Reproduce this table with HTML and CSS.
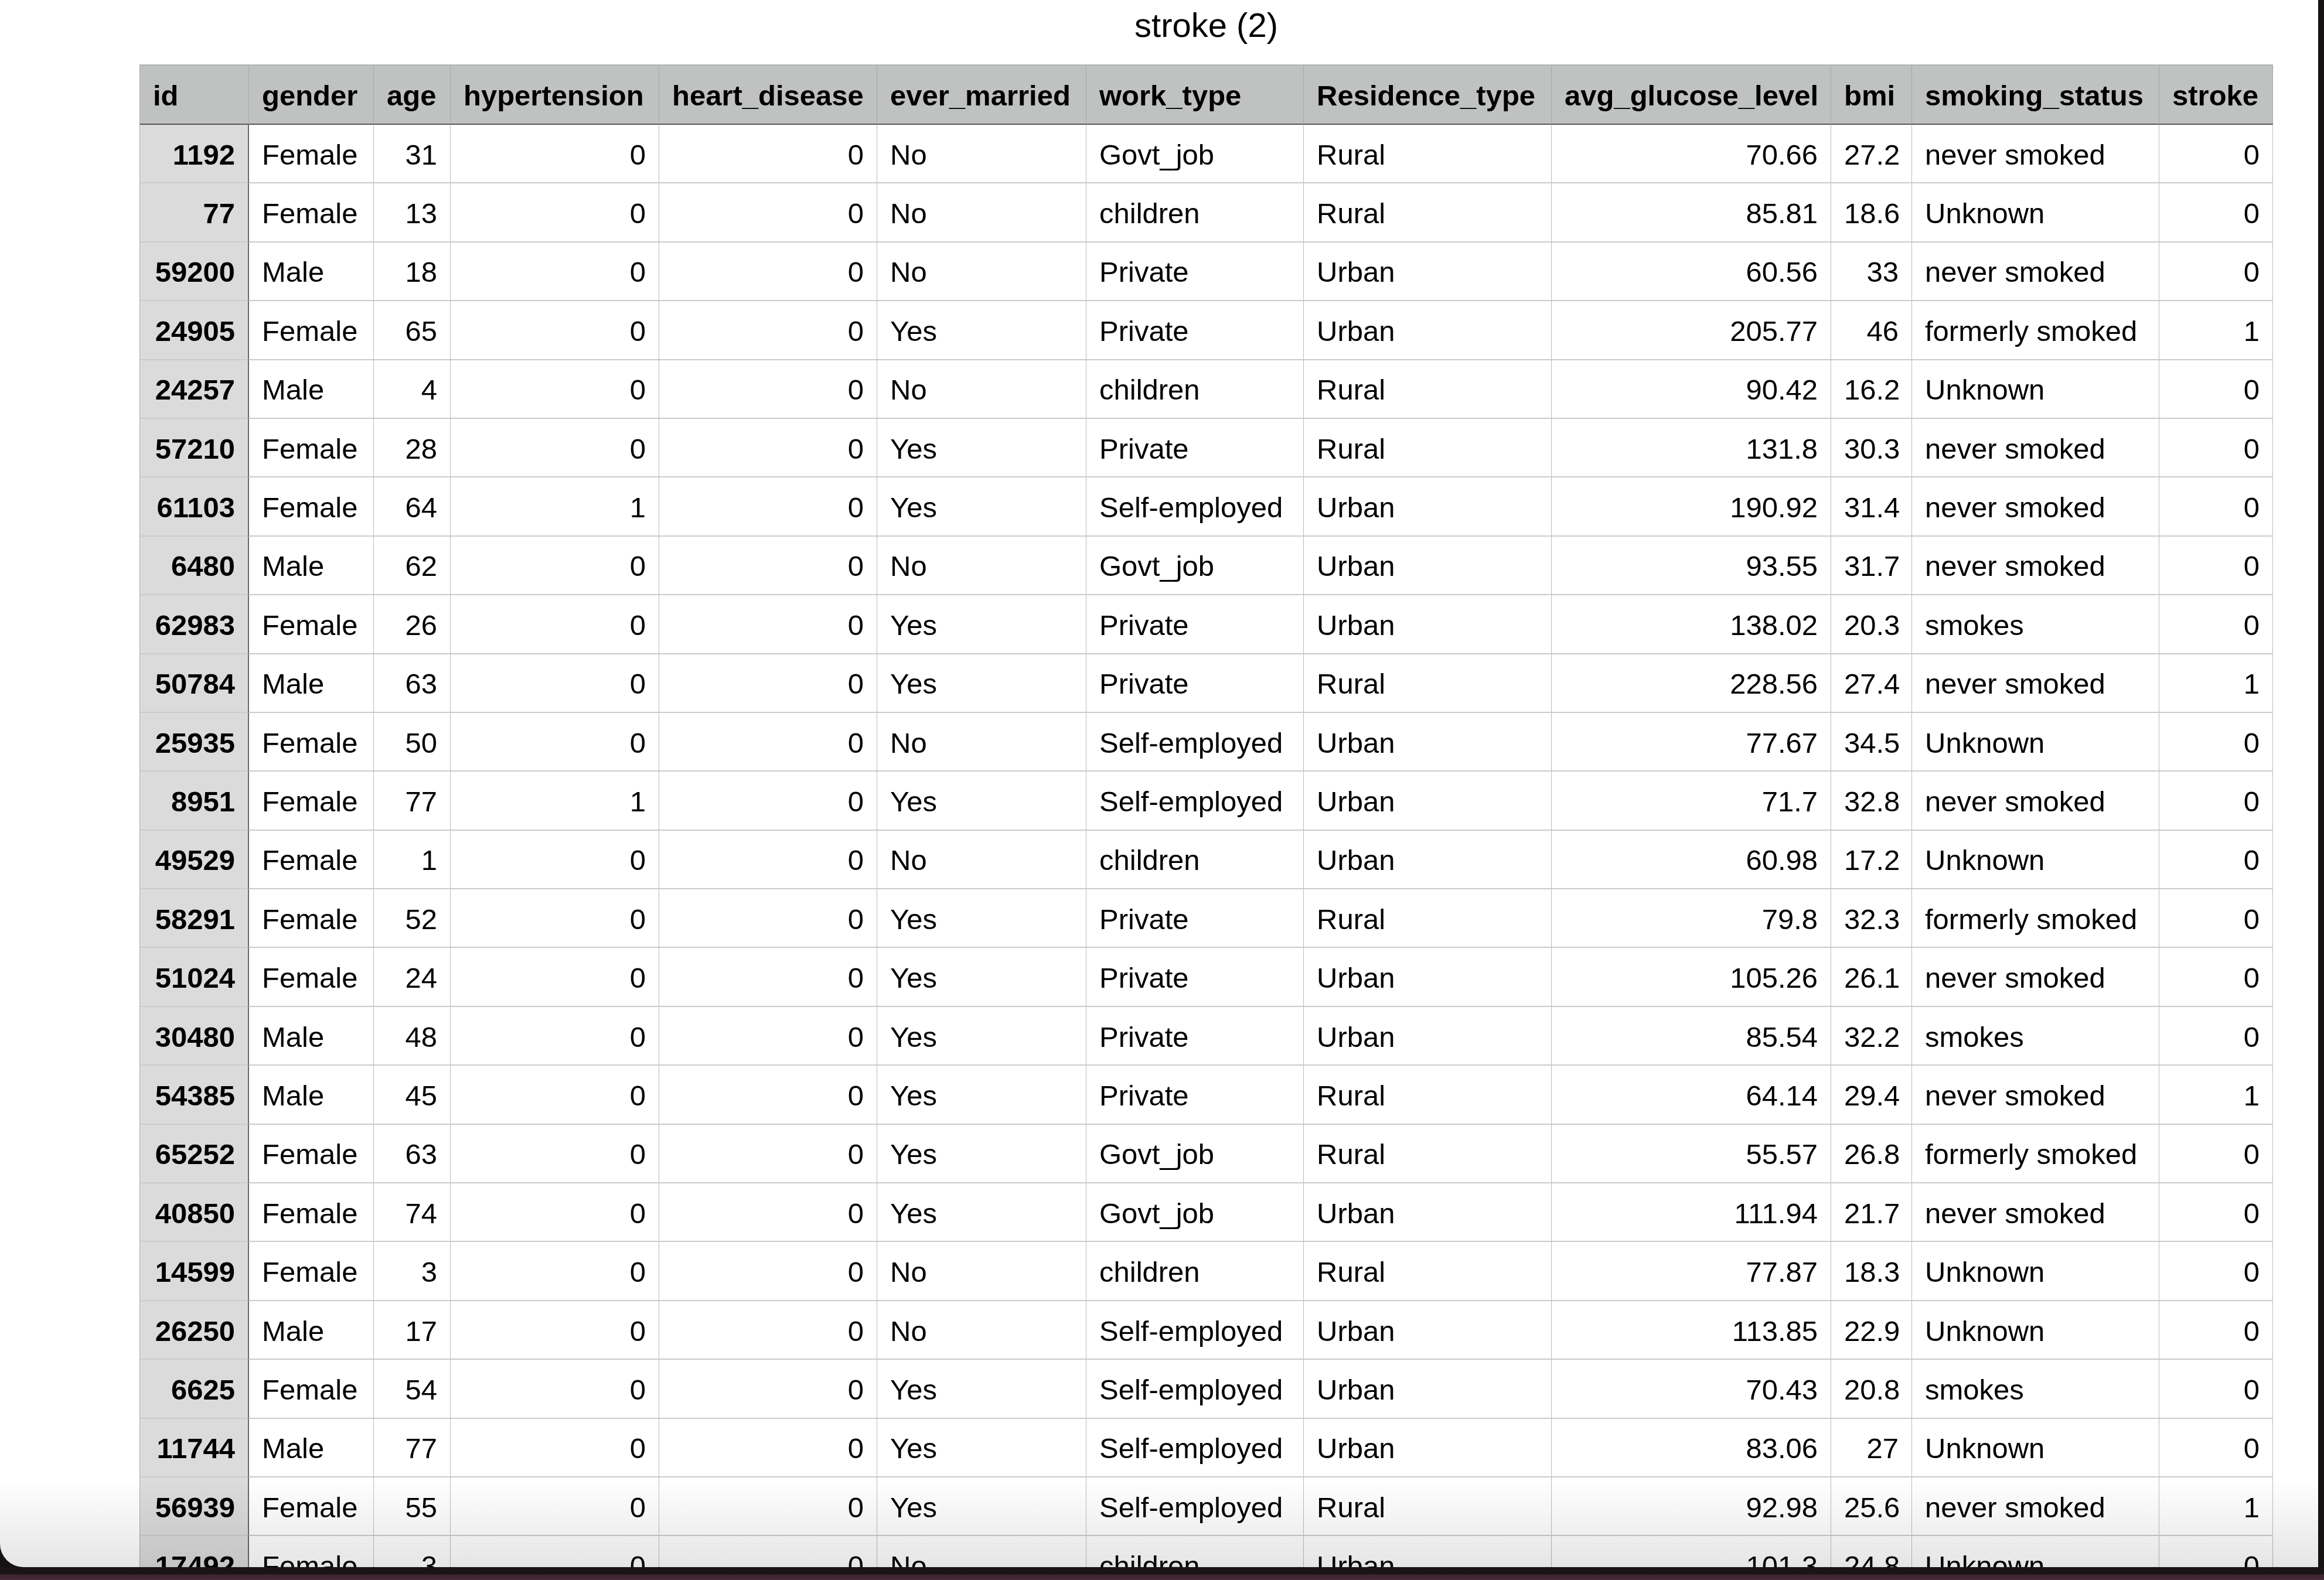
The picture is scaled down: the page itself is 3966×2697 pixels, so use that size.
FILE: index.html
```html
<!DOCTYPE html>
<html lang="en">
<head>
<meta charset="utf-8">
<title>stroke (2)</title>
<link rel="stylesheet" href="styles.css">
</head>
<body>
<div class="window">
  <div class="sheet">
    <h1 class="title">stroke (2)</h1>
    <table class="data">
      <thead>
        <tr>
          <th class="w-id">id</th>
          <th class="w-gender">gender</th>
          <th class="w-age">age</th>
          <th class="w-hyp">hypertension</th>
          <th class="w-heart">heart_disease</th>
          <th class="w-married">ever_married</th>
          <th class="w-work">work_type</th>
          <th class="w-res">Residence_type</th>
          <th class="w-glu">avg_glucose_level</th>
          <th class="w-bmi">bmi</th>
          <th class="w-smoke">smoking_status</th>
          <th class="w-stroke">stroke</th>
        </tr>
      </thead>
      <tbody>
        <tr><td class="idc">1192</td><td>Female</td><td class="n">31</td><td class="n">0</td><td class="n">0</td><td>No</td><td>Govt_job</td><td>Rural</td><td class="n">70.66</td><td class="n">27.2</td><td>never smoked</td><td class="n">0</td></tr>
        <tr><td class="idc">77</td><td>Female</td><td class="n">13</td><td class="n">0</td><td class="n">0</td><td>No</td><td>children</td><td>Rural</td><td class="n">85.81</td><td class="n">18.6</td><td>Unknown</td><td class="n">0</td></tr>
        <tr><td class="idc">59200</td><td>Male</td><td class="n">18</td><td class="n">0</td><td class="n">0</td><td>No</td><td>Private</td><td>Urban</td><td class="n">60.56</td><td class="n">33</td><td>never smoked</td><td class="n">0</td></tr>
        <tr><td class="idc">24905</td><td>Female</td><td class="n">65</td><td class="n">0</td><td class="n">0</td><td>Yes</td><td>Private</td><td>Urban</td><td class="n">205.77</td><td class="n">46</td><td>formerly smoked</td><td class="n">1</td></tr>
        <tr><td class="idc">24257</td><td>Male</td><td class="n">4</td><td class="n">0</td><td class="n">0</td><td>No</td><td>children</td><td>Rural</td><td class="n">90.42</td><td class="n">16.2</td><td>Unknown</td><td class="n">0</td></tr>
        <tr><td class="idc">57210</td><td>Female</td><td class="n">28</td><td class="n">0</td><td class="n">0</td><td>Yes</td><td>Private</td><td>Rural</td><td class="n">131.8</td><td class="n">30.3</td><td>never smoked</td><td class="n">0</td></tr>
        <tr><td class="idc">61103</td><td>Female</td><td class="n">64</td><td class="n">1</td><td class="n">0</td><td>Yes</td><td>Self-employed</td><td>Urban</td><td class="n">190.92</td><td class="n">31.4</td><td>never smoked</td><td class="n">0</td></tr>
        <tr><td class="idc">6480</td><td>Male</td><td class="n">62</td><td class="n">0</td><td class="n">0</td><td>No</td><td>Govt_job</td><td>Urban</td><td class="n">93.55</td><td class="n">31.7</td><td>never smoked</td><td class="n">0</td></tr>
        <tr><td class="idc">62983</td><td>Female</td><td class="n">26</td><td class="n">0</td><td class="n">0</td><td>Yes</td><td>Private</td><td>Urban</td><td class="n">138.02</td><td class="n">20.3</td><td>smokes</td><td class="n">0</td></tr>
        <tr><td class="idc">50784</td><td>Male</td><td class="n">63</td><td class="n">0</td><td class="n">0</td><td>Yes</td><td>Private</td><td>Rural</td><td class="n">228.56</td><td class="n">27.4</td><td>never smoked</td><td class="n">1</td></tr>
        <tr><td class="idc">25935</td><td>Female</td><td class="n">50</td><td class="n">0</td><td class="n">0</td><td>No</td><td>Self-employed</td><td>Urban</td><td class="n">77.67</td><td class="n">34.5</td><td>Unknown</td><td class="n">0</td></tr>
        <tr><td class="idc">8951</td><td>Female</td><td class="n">77</td><td class="n">1</td><td class="n">0</td><td>Yes</td><td>Self-employed</td><td>Urban</td><td class="n">71.7</td><td class="n">32.8</td><td>never smoked</td><td class="n">0</td></tr>
        <tr><td class="idc">49529</td><td>Female</td><td class="n">1</td><td class="n">0</td><td class="n">0</td><td>No</td><td>children</td><td>Urban</td><td class="n">60.98</td><td class="n">17.2</td><td>Unknown</td><td class="n">0</td></tr>
        <tr><td class="idc">58291</td><td>Female</td><td class="n">52</td><td class="n">0</td><td class="n">0</td><td>Yes</td><td>Private</td><td>Rural</td><td class="n">79.8</td><td class="n">32.3</td><td>formerly smoked</td><td class="n">0</td></tr>
        <tr><td class="idc">51024</td><td>Female</td><td class="n">24</td><td class="n">0</td><td class="n">0</td><td>Yes</td><td>Private</td><td>Urban</td><td class="n">105.26</td><td class="n">26.1</td><td>never smoked</td><td class="n">0</td></tr>
        <tr><td class="idc">30480</td><td>Male</td><td class="n">48</td><td class="n">0</td><td class="n">0</td><td>Yes</td><td>Private</td><td>Urban</td><td class="n">85.54</td><td class="n">32.2</td><td>smokes</td><td class="n">0</td></tr>
        <tr><td class="idc">54385</td><td>Male</td><td class="n">45</td><td class="n">0</td><td class="n">0</td><td>Yes</td><td>Private</td><td>Rural</td><td class="n">64.14</td><td class="n">29.4</td><td>never smoked</td><td class="n">1</td></tr>
        <tr><td class="idc">65252</td><td>Female</td><td class="n">63</td><td class="n">0</td><td class="n">0</td><td>Yes</td><td>Govt_job</td><td>Rural</td><td class="n">55.57</td><td class="n">26.8</td><td>formerly smoked</td><td class="n">0</td></tr>
        <tr><td class="idc">40850</td><td>Female</td><td class="n">74</td><td class="n">0</td><td class="n">0</td><td>Yes</td><td>Govt_job</td><td>Urban</td><td class="n">111.94</td><td class="n">21.7</td><td>never smoked</td><td class="n">0</td></tr>
        <tr><td class="idc">14599</td><td>Female</td><td class="n">3</td><td class="n">0</td><td class="n">0</td><td>No</td><td>children</td><td>Rural</td><td class="n">77.87</td><td class="n">18.3</td><td>Unknown</td><td class="n">0</td></tr>
        <tr><td class="idc">26250</td><td>Male</td><td class="n">17</td><td class="n">0</td><td class="n">0</td><td>No</td><td>Self-employed</td><td>Urban</td><td class="n">113.85</td><td class="n">22.9</td><td>Unknown</td><td class="n">0</td></tr>
        <tr><td class="idc">6625</td><td>Female</td><td class="n">54</td><td class="n">0</td><td class="n">0</td><td>Yes</td><td>Self-employed</td><td>Urban</td><td class="n">70.43</td><td class="n">20.8</td><td>smokes</td><td class="n">0</td></tr>
        <tr><td class="idc">11744</td><td>Male</td><td class="n">77</td><td class="n">0</td><td class="n">0</td><td>Yes</td><td>Self-employed</td><td>Urban</td><td class="n">83.06</td><td class="n">27</td><td>Unknown</td><td class="n">0</td></tr>
        <tr><td class="idc">56939</td><td>Female</td><td class="n">55</td><td class="n">0</td><td class="n">0</td><td>Yes</td><td>Self-employed</td><td>Rural</td><td class="n">92.98</td><td class="n">25.6</td><td>never smoked</td><td class="n">1</td></tr>
        <tr><td class="idc">17492</td><td>Female</td><td class="n">3</td><td class="n">0</td><td class="n">0</td><td>No</td><td>children</td><td>Urban</td><td class="n">101.3</td><td class="n">24.8</td><td>Unknown</td><td class="n">0</td></tr>
      </tbody>
    </table>
  </div>
  <div class="fade"></div>
</div>
<div class="dock"></div>
</body>
</html>
```

FILE: styles.css
```css
html, body {
  margin: 0;
  padding: 0;
}

body {
  background: #161213;
  font-family: "Liberation Sans", Arial, Helvetica, sans-serif;
  color: #000;
  width: 3966px;
  height: 2697px;
  overflow: hidden;
}

.window {
  position: relative;
  width: 3956px;
  height: 2675px;
  background: #fff;
  border-bottom-left-radius: 40px;
  overflow: hidden;
}

.sheet {
  padding-left: 238px;
  width: 3641px;
}

.title {
  margin: 0 0 38px;
  padding-top: 14px;
  font-size: 58px;
  line-height: 58px;
  font-weight: normal;
  text-align: center;
}

.data {
  border-collapse: separate;
  border-spacing: 0;
  table-layout: fixed;
  width: 3641px;
  font-size: 49px;
  line-height: 1;
  border-left: 1px solid #a9abaa;
  border-top: 2px solid #b1b3b2;
}

.data th,
.data td {
  box-sizing: border-box;
  padding: 4px 22px 0;
  white-space: nowrap;
  overflow: hidden;
  vertical-align: middle;
  text-align: left;
}

.data thead tr {
  height: 101px;
}

.data th {
  background: #c0c2c1;
  font-weight: bold;
  border-right: 1px solid #a6a8a7;
  border-bottom: 2px solid #575757;
}

.data tbody tr {
  height: 100.4px;
}

.data td {
  border-right: 1px solid #bcbcbc;
  border-bottom: 2px solid #cbcbcb;
  font-weight: normal;
}

.data td.n {
  text-align: right;
}

.data td.idc {
  background: #dbdbdb;
  font-weight: bold;
  text-align: right;
  border-right: 2px solid #686868;
  padding-right: 22px;
}

.w-id { width: 186px; }
.w-gender { width: 213px; }
.w-age { width: 131px; }
.w-hyp { width: 356px; }
.w-heart { width: 372px; }
.w-married { width: 357px; }
.w-work { width: 371px; }
.w-res { width: 423px; }
.w-glu { width: 477px; }
.w-bmi { width: 138px; }
.w-smoke { width: 422px; }
.w-stroke { width: 194px; }

.fade {
  position: absolute;
  left: 0;
  right: 0;
  bottom: 0;
  height: 150px;
  background: linear-gradient(to bottom, rgba(0, 0, 0, 0), rgba(0, 0, 0, 0.1));
  pointer-events: none;
}

.dock {
  height: 22px;
  background: linear-gradient(to bottom, #1c1315 0, #1c1315 52%, #3b2430 60%, #4a2b38 100%);
}
```
